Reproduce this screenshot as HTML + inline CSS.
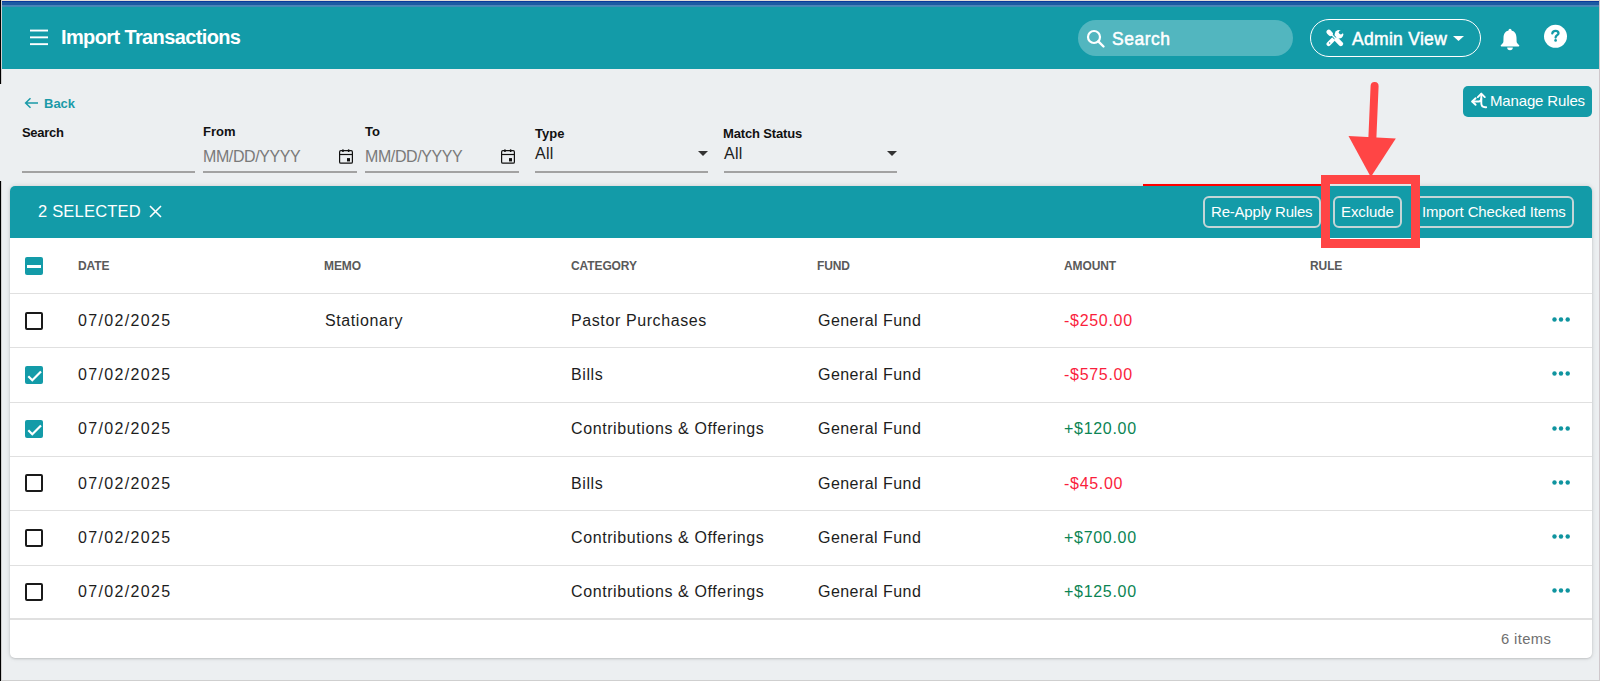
<!DOCTYPE html>
<html><head><meta charset="utf-8">
<style>
*{box-sizing:border-box;margin:0;padding:0}
html,body{width:1600px;height:681px;overflow:hidden;background:#ECEFF1;font-family:"Liberation Sans",sans-serif;position:relative}
.a{position:absolute;white-space:nowrap;line-height:1}
.hdr{position:absolute;left:2px;top:7px;width:1597px;height:62px;background:#139BA8}
.topline{position:absolute;left:2px;top:0;width:1597px;height:7px}
.lbl{font-size:13px;font-weight:bold;color:#111}
.ul{position:absolute;height:2px;background:#A2A2A2}
.card{position:absolute;left:10px;top:186px;width:1582px;height:472px;background:#fff;border-radius:5px;box-shadow:0 0 5px rgba(0,0,0,.13),0 1px 2px rgba(0,0,0,.12)}
.bar{position:absolute;left:10px;top:186px;width:1582px;height:52px;background:#139BA8;border-radius:5px 5px 0 0}
.btn{position:absolute;top:196px;height:32px;border:2px solid #C4D5D7;border-radius:6px}
.rowline{position:absolute;left:10px;width:1582px;height:1px;background:#E0E0E0}
.cell{font-size:16px;color:#1d1d1d;letter-spacing:0.6px}
.th{font-size:12px;font-weight:bold;color:#5a5a5a;letter-spacing:-0.1px}
.cb{position:absolute;left:25px;width:18px;height:18px;border:2px solid #1a1a1a;border-radius:2px}
.cbon{position:absolute;left:25px;width:18px;height:18px;background:#139BA8;border-radius:2px}
.red{color:#FA1E3C}
.grn{color:#0B8453}
.dots{position:absolute;left:1551px;width:20px;height:5px}
</style></head><body>
<!-- top browser line -->
<div class="topline" style="background:linear-gradient(#E2DDD6 0,#E2DDD6 1px,#0A3A9A 1px,#0A3A9A 2px,#1C5AA2 2px,#1C5AA2 5px,#4C82B9 5px,#3F8CB5 7px)"></div>
<div class="hdr"></div>
<!-- left / right edges -->
<div class="a" style="left:0;top:0;width:1px;height:84px;background:#000"></div>
<div class="a" style="left:1px;top:0;width:1px;height:84px;background:#CFCFCF"></div>
<div class="a" style="left:0;top:181px;width:1px;height:500px;background:#000"></div>
<div class="a" style="left:1px;top:181px;width:1px;height:500px;background:#CFCFCF"></div>
<div class="a" style="left:1599px;top:0;width:1px;height:681px;background:#CFC8CC"></div>
<div class="a" style="left:2px;top:680px;width:1598px;height:1px;background:#CFCFCF"></div>

<!-- header content -->
<svg class="a" style="left:30px;top:29px" width="20" height="17" viewBox="0 0 20 17"><rect x="0" y="0.6" width="18" height="1.9" fill="#fff"/><rect x="0" y="7.4" width="18" height="1.9" fill="#fff"/><rect x="0" y="14.2" width="18" height="1.9" fill="#fff"/></svg>
<div class="a" style="left:61px;top:27px;font-size:20px;font-weight:bold;color:#fff;letter-spacing:-0.62px">Import Transactions</div>

<div class="a" style="left:1078px;top:20px;width:215px;height:36px;border-radius:18px;background:rgba(255,255,255,0.27)"></div>
<svg class="a" style="left:1086px;top:29px" width="20" height="20" viewBox="0 0 20 20"><circle cx="8" cy="8" r="6" fill="none" stroke="#fff" stroke-width="2.2"/><line x1="12.3" y1="12.3" x2="17.5" y2="17.5" stroke="#fff" stroke-width="2.4" stroke-linecap="round"/></svg>
<div class="a" style="left:1112px;top:31px;font-size:17.5px;color:#fff;letter-spacing:0.5px;-webkit-text-stroke:0.5px #fff">Search</div>

<div class="a" style="left:1310px;top:19px;width:171px;height:38px;border-radius:19px;border:1.3px solid #fff"></div>
<svg class="a" style="left:1326px;top:29px" width="18" height="18" viewBox="0 0 18 18"><line x1="2.6" y1="15" x2="9" y2="8.6" stroke="#fff" stroke-width="4.2" stroke-linecap="round"/><circle cx="13" cy="5.2" r="4.3" fill="#fff"/><circle cx="14.9" cy="3.3" r="2.1" fill="#139BA8"/><path d="M14.1 1.1L18 5L18 0Z" fill="#139BA8"/><circle cx="3.6" cy="14" r="0.7" fill="#139BA8"/><line x1="4.6" y1="4.6" x2="11" y2="11" stroke="#139BA8" stroke-width="3" stroke-linecap="round"/><g stroke="#fff" stroke-linecap="round" fill="none"><line x1="2.8" y1="3" x2="4.6" y2="4.8" stroke-width="4.6"/><line x1="5" y1="5" x2="10" y2="10" stroke-width="1.4"/><line x1="10.7" y1="10.7" x2="14.8" y2="14.8" stroke-width="4.6"/></g></svg>
<div class="a" style="left:1352px;top:31px;font-size:17.5px;color:#fff;letter-spacing:0.3px;-webkit-text-stroke:0.5px #fff">Admin View</div>
<svg class="a" style="left:1453px;top:36px" width="11" height="5" viewBox="0 0 11 5"><path d="M0 0h11L5.5 5z" fill="#fff"/></svg>
<svg class="a" style="left:1500px;top:28px" width="20" height="23" viewBox="0 0 20 23"><circle cx="10" cy="2.3" r="1.5" fill="#fff"/><path fill="#fff" d="M10 2.5C5.2 2.5 3.6 5.8 3.5 9.8L3.4 13.4C3.3 15 1.8 16.2 0.9 17Q0.2 18.2 1.4 18.4L18.6 18.4Q19.8 18.2 19.1 17C18.2 16.2 16.7 15 16.6 13.4L16.5 9.8C16.4 5.8 14.8 2.5 10 2.5Z"/><path fill="#fff" d="M7.2 19.6h5.6a2.8 2.6 0 0 1 -5.6 0z"/></svg>
<svg class="a" style="left:1543px;top:24px" width="25" height="25" viewBox="0 0 25 25"><circle cx="12.5" cy="12.3" r="11.5" fill="#fff"/><path d="M9.3 9.4C9.5 7.6 10.8 6.8 12.5 6.8C14.3 6.8 15.5 7.8 15.5 9.2C15.5 11.2 12.6 11.2 12.6 13.6" fill="none" stroke="#139BA8" stroke-width="2.3" stroke-linecap="round"/><circle cx="12.6" cy="16.4" r="1.35" fill="#139BA8"/></svg>

<!-- filter area -->
<svg class="a" style="left:24px;top:97px" width="15" height="12" viewBox="0 0 15 12"><path d="M14 6H2M6.5 1.3L1.6 6l4.9 4.7" fill="none" stroke="#1A9AA8" stroke-width="1.5"/></svg>
<div class="a" style="left:44px;top:97px;font-size:13px;font-weight:bold;color:#1A9AA8">Back</div>

<div class="a lbl" style="left:22px;top:126px;letter-spacing:-0.3px">Search</div>
<div class="ul" style="left:22px;top:171px;width:173px"></div>
<div class="a lbl" style="left:203px;top:125px">From</div>
<div class="a" style="left:203px;top:149px;font-size:16px;color:#7A7A7A;letter-spacing:-0.4px">MM/DD/YYYY</div>
<svg class="a" style="left:339px;top:149px" width="14" height="15" viewBox="0 0 14 15"><rect x="0.6" y="1.6" width="12.8" height="12.6" rx="1.3" fill="none" stroke="#111" stroke-width="1.2"/><line x1="0.6" y1="5.5" x2="13.4" y2="5.5" stroke="#111" stroke-width="1.2"/><rect x="3.1" y="0.2" width="1.7" height="2.8" rx="0.85" fill="#111"/><rect x="8.8" y="0.2" width="1.7" height="2.8" rx="0.85" fill="#111"/><rect x="8" y="9.1" width="3" height="3.3" fill="#111"/></svg>
<div class="ul" style="left:203px;top:171px;width:154px"></div>
<div class="a lbl" style="left:365px;top:125px">To</div>
<div class="a" style="left:365px;top:149px;font-size:16px;color:#7A7A7A;letter-spacing:-0.4px">MM/DD/YYYY</div>
<svg class="a" style="left:501px;top:149px" width="14" height="15" viewBox="0 0 14 15"><rect x="0.6" y="1.6" width="12.8" height="12.6" rx="1.3" fill="none" stroke="#111" stroke-width="1.2"/><line x1="0.6" y1="5.5" x2="13.4" y2="5.5" stroke="#111" stroke-width="1.2"/><rect x="3.1" y="0.2" width="1.7" height="2.8" rx="0.85" fill="#111"/><rect x="8.8" y="0.2" width="1.7" height="2.8" rx="0.85" fill="#111"/><rect x="8" y="9.1" width="3" height="3.3" fill="#111"/></svg>
<div class="ul" style="left:365px;top:171px;width:154px"></div>
<div class="a lbl" style="left:535px;top:127px">Type</div>
<div class="a" style="left:535px;top:146px;font-size:16px;color:#1d1d1d;letter-spacing:0.3px">All</div>
<svg class="a" style="left:698px;top:151px" width="10" height="5" viewBox="0 0 10 5"><path d="M0 0h10L5 5z" fill="#333"/></svg>
<div class="ul" style="left:535px;top:171px;width:173px"></div>
<div class="a lbl" style="left:723px;top:127px;letter-spacing:-0.15px">Match Status</div>
<div class="a" style="left:724px;top:146px;font-size:16px;color:#1d1d1d;letter-spacing:0.3px">All</div>
<svg class="a" style="left:887px;top:151px" width="10" height="5" viewBox="0 0 10 5"><path d="M0 0h10L5 5z" fill="#333"/></svg>
<div class="ul" style="left:724px;top:171px;width:173px"></div>

<!-- manage rules -->
<div class="a" style="left:1463px;top:86px;width:129px;height:31px;border-radius:5px;background:#139BA8"></div>
<svg class="a" style="left:1470px;top:92px" width="18" height="17" viewBox="0 0 18 17"><g fill="none" stroke="#fff" stroke-width="1.9" stroke-linecap="round" stroke-linejoin="round"><path d="M11.3 2.2V11.3Q11.3 15.2 15.2 15.2H16.2"/><path d="M2.4 9.5H8.6Q11.3 9.5 11.3 6.8"/><path d="M7.8 5.1L11.3 1.6L14.8 5.1"/><path d="M5.6 6.2L2.2 9.5L5.6 12.8"/></g></svg>
<div class="a" style="left:1490px;top:93px;font-size:15px;color:#fff;letter-spacing:-0.15px">Manage Rules</div>

<!-- card -->
<div class="card"></div>
<div class="bar"></div>
<div class="a" style="left:38px;top:203px;font-size:16.5px;color:#fff;letter-spacing:0.2px">2 SELECTED</div>
<svg class="a" style="left:149px;top:205px" width="13" height="13" viewBox="0 0 13 13"><path d="M1 1L12 12M12 1L1 12" stroke="#fff" stroke-width="1.6"/></svg>

<div class="btn" style="left:1203px;width:118px"></div>
<div class="a" style="left:1211px;top:204px;font-size:15px;color:#fff;letter-spacing:-0.2px">Re-Apply Rules</div>
<div class="btn" style="left:1333px;width:69px"></div>
<div class="a" style="left:1341px;top:204px;font-size:15px;color:#fff;letter-spacing:-0.1px">Exclude</div>
<div class="btn" style="left:1413px;width:161px"></div>
<div class="a" style="left:1422px;top:204px;font-size:15px;color:#fff;letter-spacing:-0.15px">Import Checked Items</div>

<!-- table header -->
<div class="cbon" style="top:257px"></div>
<div class="a" style="left:27px;top:265px;width:14px;height:2.5px;background:#fff"></div>
<div class="a th" style="left:78px;top:260px">DATE</div>
<div class="a th" style="left:324px;top:260px">MEMO</div>
<div class="a th" style="left:571px;top:260px">CATEGORY</div>
<div class="a th" style="left:817px;top:260px">FUND</div>
<div class="a th" style="left:1064px;top:260px">AMOUNT</div>
<div class="a th" style="left:1310px;top:260px">RULE</div>
<div class="rowline" style="top:293px"></div>
<div class="rowline" style="top:347px"></div>
<div class="rowline" style="top:402px"></div>
<div class="rowline" style="top:456px"></div>
<div class="rowline" style="top:510px"></div>
<div class="rowline" style="top:565px"></div>
<div class="rowline" style="top:618px;height:2px"></div>
<!--ROWS-->
<div class="cb" style="top:312px"></div>
<div class="a cell" style="left:78px;top:313px;letter-spacing:1.35px">07/02/2025</div>
<div class="a cell" style="left:325px;top:313px">Stationary</div>
<div class="a cell" style="left:571px;top:313px">Pastor Purchases</div>
<div class="a cell" style="left:818px;top:313px;letter-spacing:0.45px">General Fund</div>
<div class="a cell red" style="left:1064px;top:313px;letter-spacing:0.7px">-$250.00</div>
<svg class="a" style="left:1551px;top:317px" width="20" height="5" viewBox="0 0 20 5"><circle cx="3.5" cy="2.5" r="2.2" fill="#0F949F"/><circle cx="10" cy="2.5" r="2.2" fill="#0F949F"/><circle cx="16.7" cy="2.5" r="2.2" fill="#0F949F"/></svg>
<div class="cbon" style="top:366px"></div><svg class="a" style="left:25px;top:366px" width="18" height="18" viewBox="0 0 18 18"><path d="M3.3 10.2L7.3 14.2L16 5.5" fill="none" stroke="#fff" stroke-width="2.2"/></svg>
<div class="a cell" style="left:78px;top:367px;letter-spacing:1.35px">07/02/2025</div>
<div class="a cell" style="left:571px;top:367px">Bills</div>
<div class="a cell" style="left:818px;top:367px;letter-spacing:0.45px">General Fund</div>
<div class="a cell red" style="left:1064px;top:367px;letter-spacing:0.7px">-$575.00</div>
<svg class="a" style="left:1551px;top:371px" width="20" height="5" viewBox="0 0 20 5"><circle cx="3.5" cy="2.5" r="2.2" fill="#0F949F"/><circle cx="10" cy="2.5" r="2.2" fill="#0F949F"/><circle cx="16.7" cy="2.5" r="2.2" fill="#0F949F"/></svg>
<div class="cbon" style="top:420px"></div><svg class="a" style="left:25px;top:420px" width="18" height="18" viewBox="0 0 18 18"><path d="M3.3 10.2L7.3 14.2L16 5.5" fill="none" stroke="#fff" stroke-width="2.2"/></svg>
<div class="a cell" style="left:78px;top:421px;letter-spacing:1.35px">07/02/2025</div>
<div class="a cell" style="left:571px;top:421px">Contributions &amp; Offerings</div>
<div class="a cell" style="left:818px;top:421px;letter-spacing:0.45px">General Fund</div>
<div class="a cell grn" style="left:1064px;top:421px;letter-spacing:0.7px">+$120.00</div>
<svg class="a" style="left:1551px;top:426px" width="20" height="5" viewBox="0 0 20 5"><circle cx="3.5" cy="2.5" r="2.2" fill="#0F949F"/><circle cx="10" cy="2.5" r="2.2" fill="#0F949F"/><circle cx="16.7" cy="2.5" r="2.2" fill="#0F949F"/></svg>
<div class="cb" style="top:474px"></div>
<div class="a cell" style="left:78px;top:476px;letter-spacing:1.35px">07/02/2025</div>
<div class="a cell" style="left:571px;top:476px">Bills</div>
<div class="a cell" style="left:818px;top:476px;letter-spacing:0.45px">General Fund</div>
<div class="a cell red" style="left:1064px;top:476px;letter-spacing:0.7px">-$45.00</div>
<svg class="a" style="left:1551px;top:480px" width="20" height="5" viewBox="0 0 20 5"><circle cx="3.5" cy="2.5" r="2.2" fill="#0F949F"/><circle cx="10" cy="2.5" r="2.2" fill="#0F949F"/><circle cx="16.7" cy="2.5" r="2.2" fill="#0F949F"/></svg>
<div class="cb" style="top:529px"></div>
<div class="a cell" style="left:78px;top:530px;letter-spacing:1.35px">07/02/2025</div>
<div class="a cell" style="left:571px;top:530px">Contributions &amp; Offerings</div>
<div class="a cell" style="left:818px;top:530px;letter-spacing:0.45px">General Fund</div>
<div class="a cell grn" style="left:1064px;top:530px;letter-spacing:0.7px">+$700.00</div>
<svg class="a" style="left:1551px;top:534px" width="20" height="5" viewBox="0 0 20 5"><circle cx="3.5" cy="2.5" r="2.2" fill="#0F949F"/><circle cx="10" cy="2.5" r="2.2" fill="#0F949F"/><circle cx="16.7" cy="2.5" r="2.2" fill="#0F949F"/></svg>
<div class="cb" style="top:583px"></div>
<div class="a cell" style="left:78px;top:584px;letter-spacing:1.35px">07/02/2025</div>
<div class="a cell" style="left:571px;top:584px">Contributions &amp; Offerings</div>
<div class="a cell" style="left:818px;top:584px;letter-spacing:0.45px">General Fund</div>
<div class="a cell grn" style="left:1064px;top:584px;letter-spacing:0.7px">+$125.00</div>
<svg class="a" style="left:1551px;top:588px" width="20" height="5" viewBox="0 0 20 5"><circle cx="3.5" cy="2.5" r="2.2" fill="#0F949F"/><circle cx="10" cy="2.5" r="2.2" fill="#0F949F"/><circle cx="16.7" cy="2.5" r="2.2" fill="#0F949F"/></svg>
<!--/ROWS-->
<div class="a" style="left:1501px;top:632px;font-size:14.8px;color:#707070;letter-spacing:0.35px">6 items</div>
<!-- annotations -->
<div class="a" style="left:1143px;top:184px;width:180px;height:2px;background:#FF0000"></div>
<div class="a" style="left:1321px;top:175px;width:99px;height:73px;border:9.5px solid #FF4545"></div>
<svg class="a" style="left:1340px;top:75px" width="64" height="110" viewBox="1340 75 64 110"><line x1="1374.6" y1="86" x2="1372.3" y2="140" stroke="#FF4545" stroke-width="8" stroke-linecap="round"/><path d="M1348.5 136L1395.8 138.5L1370.8 177Z" fill="#FF4545"/></svg>
</body></html>
